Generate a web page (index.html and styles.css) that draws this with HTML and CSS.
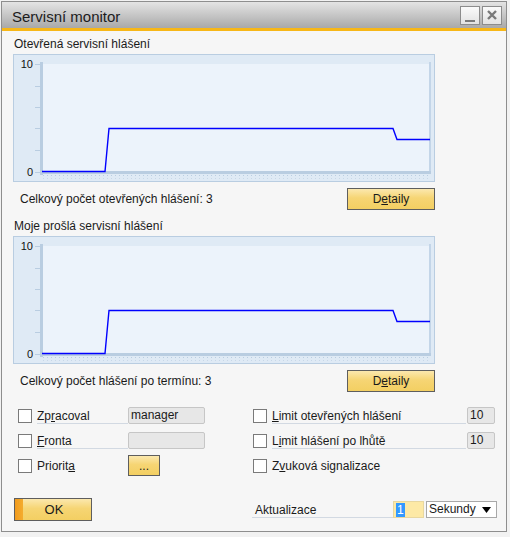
FILE: index.html
```html
<!DOCTYPE html>
<html>
<head>
<meta charset="utf-8">
<link rel="stylesheet" href="styles.css">
</head>
<body>
<div class="window">
  <div class="titlebar">
    <span class="title">Servisní monitor</span>
    <div class="tbuttons">
      <div class="tbtn"><svg width="18" height="17" viewBox="0 0 18 17"><rect x="4" y="13" width="10" height="2" fill="#7a7a7a"/></svg></div>
      <div class="tbtn"><svg width="18" height="17" viewBox="0 0 18 17"><path d="M5 4 L13 12 M13 4 L5 12" stroke="#7a7a7a" stroke-width="2.4"/></svg></div>
    </div>
  </div>
  <div class="content">
    <div class="section-label">Otevřená servisní hlášení</div>
    <svg class="chart" width="423" height="129" viewBox="0 0 423 129">
      <rect x="0.5" y="0.5" width="421" height="127" fill="#dfeaf5" stroke="#b9cde1"/>
      <rect x="29" y="10" width="389" height="108" fill="#ecf3fb"/>
      <rect x="416" y="8" width="2" height="112" fill="#c3d5e8"/>
      <rect x="27" y="8" width="3" height="113" fill="#b9cde1"/>
      <rect x="27" y="117" width="391" height="3" fill="#b9cde1"/>
      <g stroke="#b9cde1" stroke-width="1">
        <line x1="22" y1="10.5" x2="27" y2="10.5"/><line x1="22" y1="32.5" x2="27" y2="32.5"/><line x1="22" y1="53.5" x2="27" y2="53.5"/><line x1="22" y1="74.5" x2="27" y2="74.5"/><line x1="22" y1="96.5" x2="27" y2="96.5"/><line x1="22" y1="118.5" x2="27" y2="118.5"/>
      </g>
      <line x1="30" y1="121.5" x2="418" y2="121.5" stroke="#b9cde1" stroke-dasharray="1 3"/>
      <line x1="30" y1="124.5" x2="418" y2="124.5" stroke="#c8d8e8" stroke-dasharray="1 3"/>
      <text x="20" y="14" text-anchor="end" class="axis">10</text>
      <text x="20" y="122" text-anchor="end" class="axis">0</text>
      <path d="M29 117.5 H92 L96 74.5 H380 L384 85.5 H417" fill="none" stroke="#0000ff" stroke-width="1.4"/>
    </svg>
    <div class="summary">
      <span>Celkový počet otevřených hlášení: 3</span>
      <button class="ybtn detail">D<u>e</u>taily</button>
    </div>
    <div class="section-label second">Moje prošlá servisní hlášení</div>
    <svg class="chart" width="423" height="129" viewBox="0 0 423 129">
      <rect x="0.5" y="0.5" width="421" height="127" fill="#dfeaf5" stroke="#b9cde1"/>
      <rect x="29" y="10" width="389" height="108" fill="#ecf3fb"/>
      <rect x="416" y="8" width="2" height="112" fill="#c3d5e8"/>
      <rect x="27" y="8" width="3" height="113" fill="#b9cde1"/>
      <rect x="27" y="117" width="391" height="3" fill="#b9cde1"/>
      <g stroke="#b9cde1" stroke-width="1">
        <line x1="22" y1="10.5" x2="27" y2="10.5"/><line x1="22" y1="32.5" x2="27" y2="32.5"/><line x1="22" y1="53.5" x2="27" y2="53.5"/><line x1="22" y1="74.5" x2="27" y2="74.5"/><line x1="22" y1="96.5" x2="27" y2="96.5"/><line x1="22" y1="118.5" x2="27" y2="118.5"/>
      </g>
      <line x1="30" y1="121.5" x2="418" y2="121.5" stroke="#b9cde1" stroke-dasharray="1 3"/>
      <line x1="30" y1="124.5" x2="418" y2="124.5" stroke="#c8d8e8" stroke-dasharray="1 3"/>
      <text x="20" y="14" text-anchor="end" class="axis">10</text>
      <text x="20" y="122" text-anchor="end" class="axis">0</text>
      <path d="M29 117.5 H92 L96 74.5 H380 L384 85.5 H417" fill="none" stroke="#0000ff" stroke-width="1.4"/>
    </svg>
    <div class="summary">
      <span>Celkový počet hlášení po termínu: 3</span>
      <button class="ybtn detail">D<u>e</u>taily</button>
    </div>
    <div class="form">
      <div class="col left">
        <div class="frow">
          <span class="cb"></span>
          <span class="flabel lined">Zp<u>r</u>acoval</span>
          <span class="field wide">manager</span>
        </div>
        <div class="frow">
          <span class="cb"></span>
          <span class="flabel lined"><u>F</u>ronta</span>
          <span class="field wide"></span>
        </div>
        <div class="frow">
          <span class="cb"></span>
          <span class="flabel">Priorit<u>a</u></span>
          <button class="ybtn dots">...</button>
        </div>
      </div>
      <div class="col right">
        <div class="frow">
          <span class="cb"></span>
          <span class="flabel lined grow"><u>L</u>imit otevřených hlášení</span>
          <span class="field num">10</span>
        </div>
        <div class="frow">
          <span class="cb"></span>
          <span class="flabel lined grow">L<u>i</u>mit hlášení po lhůtě</span>
          <span class="field num">10</span>
        </div>
        <div class="frow">
          <span class="cb"></span>
          <span class="flabel grow">Z<u>v</u>uková signalizace</span>
        </div>
      </div>
    </div>
    <div class="bottom">
      <button class="ybtn ok">OK</button>
      <div class="refresh">
        <span class="flabel lined grow">Aktualizace</span>
        <span class="interval"><span class="sel">1</span></span>
        <span class="select">Sekundy<svg width="9" height="6" viewBox="0 0 9 6"><path d="M0 0 H9 L4.5 6 Z" fill="#000"/></svg></span>
      </div>
    </div>
  </div>
</div>
</body>
</html>
```

FILE: styles.css
```css
* { box-sizing: border-box; }
html, body {
  margin: 0;
  padding: 0;
  background: #f2f2f2;
}
body {
  width: 510px;
  height: 537px;
  overflow: hidden;
  font-family: "Liberation Sans", Arial, sans-serif;
  font-size: 12px;
  color: #1a1a1a;
}
.window {
  margin: 1px 0 0 1px;
  width: 506px;
  height: 531px;
  border: 1px solid #8e8e8e;
  background: #f6f6f6;
  display: flex;
  flex-direction: column;
}
.titlebar {
  height: 29px;
  background: linear-gradient(#e4e4e4, #a9a9a9);
  border-bottom: 3px solid #f7b718;
  display: flex;
  align-items: center;
  justify-content: space-between;
  padding: 0 4px 0 10px;
}
.title {
  font-size: 15px;
  color: #1c1c1c;
  margin-top: 2px;
}
.tbuttons {
  display: flex;
  gap: 2px;
  margin-top: 1px;
}
.tbtn {
  width: 20px;
  height: 19px;
  border: 1px solid #8c8c8c;
  background: linear-gradient(#fafafa, #e2e2e2);
  display: flex;
}
.content {
  flex: 1;
  padding: 6px 0 0 11px;
  display: flex;
  flex-direction: column;
}
.section-label {
  height: 15px;
  line-height: 15px;
  margin-left: 1px;
  margin-bottom: 2px;
}
.section-label.second {
  margin-top: 9px;
}
.chart {
  display: block;
}
.axis {
  font-family: "Liberation Sans", Arial, sans-serif;
  font-size: 11px;
  fill: #111;
}
.summary {
  width: 422px;
  margin-top: 5px;
  display: flex;
  justify-content: space-between;
  align-items: center;
  padding-left: 7px;
}
.ybtn {
  font-family: "Liberation Sans", Arial, sans-serif;
  font-size: 12px;
  color: #1a1a1a;
  border: 1px solid #5e5e5e;
  background: linear-gradient(#fbe8ae, #f6d574 45%, #f3cf62);
  padding: 0;
  margin: 0;
}
.detail {
  width: 88px;
  height: 22px;
}
.form {
  margin-top: 11px;
  display: grid;
  grid-template-columns: 187px 242px;
  column-gap: 48px;
  padding-left: 5px;
}
.col {
  display: flex;
  flex-direction: column;
}
.frow {
  height: 25px;
  display: flex;
  align-items: center;
}
.cb {
  width: 14px;
  height: 14px;
  border: 1px solid #7a7a7a;
  background: #fff;
  flex: none;
  margin-right: 5px;
}
.flabel {
  height: 17px;
  line-height: 17px;
  padding-top: 1px;
  white-space: nowrap;
}
.left .flabel {
  width: 91px;
}
.flabel.lined {
  border-bottom: 1px solid #d2d9e2;
}
.grow {
  flex: 1;
}
.field {
  height: 17px;
  border: 1px solid #c6c6c6;
  border-radius: 2px;
  background: #e7e7e7;
  line-height: 15px;
  padding-left: 2px;
}
.field.wide {
  width: 77px;
}
.field.num {
  width: 28px;
  margin-left: 1px;
}
.dots {
  width: 32px;
  height: 21px;
  line-height: 14px;
}
.bottom {
  margin-top: 20px;
  display: flex;
  align-items: center;
  width: 484px;
}
.ok {
  width: 78px;
  height: 23px;
  margin-left: 1px;
  background: linear-gradient(90deg, #f09a1e 0, #f4ac2e 8px, transparent 8px), linear-gradient(#fbe8ae, #f6d574 45%, #f3cf62);
  font-size: 13px;
  padding-left: 2px;
}
.refresh {
  margin-left: 160px;
  flex: 1;
  display: flex;
  align-items: center;
}
.refresh .flabel {
  padding-left: 3px;
}
.interval {
  width: 31px;
  height: 17px;
  background: #fde9a6;
  border: 1px solid #e8d7a0;
  display: flex;
  align-items: center;
  padding-left: 2px;
}
.sel {
  background: #3399ff;
  color: #fff;
  height: 14px;
  line-height: 14px;
  padding: 0 1px;
}
.select {
  width: 71px;
  height: 17px;
  margin-left: 2px;
  background: #fff;
  border: 1px solid #a8a8a8;
  display: flex;
  align-items: center;
  justify-content: space-between;
  padding: 0 5px 0 2px;
  line-height: 15px;
}
```
